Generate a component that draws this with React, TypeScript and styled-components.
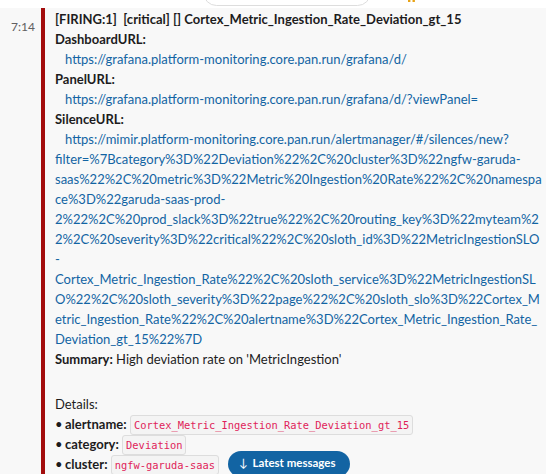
import React from "react"
import styled, { createGlobalStyle } from "styled-components"

const GlobalStyle = createGlobalStyle`
  html, body {
    margin: 0;
    padding: 0;
    background: #f8f8f8;
  }
  body {
    font-family: Lato, "Noto Sans", sans-serif;
    color: #1d1c1d;
  }
`

type Part = { text: string; kind?: "bold" | "link" | "plain" }

const lines: Part[][] = [
  [{ text: "[FIRING:1]  [critical] [] Cortex_Metric_Ingestion_Rate_Deviation_gt_15", kind: "bold" }],
  [{ text: "DashboardURL:", kind: "bold" }],
  [{ text: "   " }, { text: "https://grafana.platform-monitoring.core.pan.run/grafana/d/", kind: "link" }],
  [{ text: "PanelURL:", kind: "bold" }],
  [{ text: "   " }, { text: "https://grafana.platform-monitoring.core.pan.run/grafana/d/?viewPanel=", kind: "link" }],
  [{ text: "SilenceURL:", kind: "bold" }],
  [{ text: "   " }, { text: "https://mimir.platform-monitoring.core.pan.run/alertmanager/#/silences/new?", kind: "link" }],
  [{ text: "filter=%7Bcategory%3D%22Deviation%22%2C%20cluster%3D%22ngfw-garuda-", kind: "link" }],
  [{ text: "saas%22%2C%20metric%3D%22Metric%20Ingestion%20Rate%22%2C%20namespa", kind: "link" }],
  [{ text: "ce%3D%22garuda-saas-prod-", kind: "link" }],
  [{ text: "2%22%2C%20prod_slack%3D%22true%22%2C%20routing_key%3D%22myteam%2", kind: "link" }],
  [{ text: "2%2C%20severity%3D%22critical%22%2C%20sloth_id%3D%22MetricIngestionSLO", kind: "link" }],
  [{ text: "-", kind: "link" }],
  [{ text: "Cortex_Metric_Ingestion_Rate%22%2C%20sloth_service%3D%22MetricIngestionSL", kind: "link" }],
  [{ text: "O%22%2C%20sloth_severity%3D%22page%22%2C%20sloth_slo%3D%22Cortex_M", kind: "link" }],
  [{ text: "etric_Ingestion_Rate%22%2C%20alertname%3D%22Cortex_Metric_Ingestion_Rate_", kind: "link" }],
  [{ text: "Deviation_gt_15%22%7D", kind: "link" }],
  [{ text: "Summary:", kind: "bold" }, { text: " High deviation rate on 'MetricIngestion'" }],
]

const details: [string, string][] = [
  ["alertname", "Cortex_Metric_Ingestion_Rate_Deviation_gt_15"],
  ["category", "Deviation"],
  ["cluster", "ngfw-garuda-saas"],
]

function renderPart(part: Part, i: number) {
  if (part.kind === "bold") return <Bold key={i}>{part.text}</Bold>
  if (part.kind === "link") return <Link key={i}>{part.text}</Link>
  return <span key={i}>{part.text}</span>
}

function App() {
  return (
    <Page>
      <GlobalStyle />
      <TopStrip>
        <DatePill>Tuesday, January 14th</DatePill>
        <Actions>
          <ActionIcon>
            <svg width="12" height="12" viewBox="0 0 12 12">
              <rect x="2" y="0" width="2.4" height="10" fill="#e8a317" />
              <rect x="6.5" y="0" width="2.4" height="10" fill="#e8a317" />
            </svg>
          </ActionIcon>
          <ActionIcon>
            <svg width="14" height="14" viewBox="0 0 14 14">
              <circle cx="7" cy="3" r="5" fill="none" stroke="#616061" strokeWidth="1.4" />
            </svg>
          </ActionIcon>
          <ActionIcon>
            <svg width="14" height="14" viewBox="0 0 14 14">
              <path d="M2 0v4h10V0" fill="none" stroke="#616061" strokeWidth="1.4" />
            </svg>
          </ActionIcon>
          <ActionIcon>
            <svg width="14" height="14" viewBox="0 0 14 14">
              <path d="M3 0l2 4M9 0l2 4" fill="none" stroke="#616061" strokeWidth="1.4" />
            </svg>
          </ActionIcon>
          <ActionIcon>
            <svg width="14" height="14" viewBox="0 0 14 14">
              <path d="M2 0l2 5 3-3 3 3 2-5" fill="none" stroke="#616061" strokeWidth="1.4" />
            </svg>
          </ActionIcon>
        </Actions>
      </TopStrip>
      <MessageRow>
        <Gutter>
          <Time>7:14</Time>
        </Gutter>
        <Attachment>
          {lines.map((line, i) => (
            <Line key={i}>{line.map(renderPart)}</Line>
          ))}
          <Spacer />
          <Line>Details:</Line>
          {details.map(([key, value]) => (
            <Line key={key}>
              <Bullet>•</Bullet>
              <Bold>{key}:</Bold> <Code>{value}</Code>
            </Line>
          ))}
        </Attachment>
      </MessageRow>
      <LatestButton>
        <Arrow>↓</Arrow> Latest messages
      </LatestButton>
    </Page>
  )
}

const Page = styled.div`
  position: relative;
  width: 546px;
  height: 474px;
  overflow: hidden;
  background: #f8f8f8;
`

const TopStrip = styled.div`
  position: relative;
  height: 8px;
  background: #ffffff;
`

const DatePill = styled.div`
  position: absolute;
  left: 203px;
  top: -21px;
  width: 168px;
  height: 27px;
  box-sizing: border-box;
  border: 1px solid #dddddd;
  border-radius: 14px;
  background: #ffffff;
  font-size: 13px;
  font-weight: 700;
  line-height: 25px;
  text-align: center;
  color: #1d1c1d;
`

const Actions = styled.div`
  position: absolute;
  left: 405px;
  top: -6px;
  display: flex;
  gap: 15px;
  align-items: flex-start;
`

const ActionIcon = styled.div`
  width: 14px;
  height: 10px;
  display: flex;
  align-items: flex-end;
  justify-content: center;
`

const MessageRow = styled.div`
  display: flex;
  align-items: stretch;
  height: 466px;
`

const Gutter = styled.div`
  width: 41px;
  flex-shrink: 0;
  box-sizing: border-box;
  padding-right: 6px;
  text-align: right;
`

const Time = styled.div`
  margin-top: 11px;
  font-size: 12px;
  line-height: 16px;
  color: #616061;
`

const Attachment = styled.div`
  flex: 1;
  min-width: 0;
  border-left: 4px solid #a30d0d;
  padding: 1px 0 0 10px;
  font-size: 13px;
  line-height: 20px;
`

const Line = styled.div`
  white-space: pre;
  height: 20px;
`

const Bold = styled.span`
  font-weight: 700;
`

const Link = styled.span`
  color: #1264a3;
`

const Code = styled.code`
  font-family: "DejaVu Sans Mono", "Liberation Mono", monospace;
  font-size: 10.4px;
  color: #e01e5a;
  background: #f4f4f4;
  border: 1px solid #dddddd;
  border-radius: 3px;
  padding: 3px 3px;
`

const Bullet = styled.span`
  display: inline-block;
  width: 10px;
`

const Spacer = styled.div`
  height: 25px;
`

const LatestButton = styled.div`
  position: absolute;
  left: 228px;
  top: 451px;
  height: 26px;
  padding: 0 14px 0 11px;
  border-radius: 13px;
  background: #1264a3;
  color: #ffffff;
  font-size: 11.5px;
  font-weight: 700;
  line-height: 24px;
  white-space: nowrap;
`

const Arrow = styled.span`
  font-weight: 400;
  margin-right: 2px;
`

export default App
